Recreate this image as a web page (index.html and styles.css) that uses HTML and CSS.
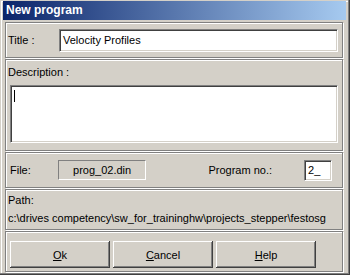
FILE: index.html
```html
<!DOCTYPE html>
<html lang="en">
<head>
  <meta charset="UTF-8">
  <title>New program</title>
  <link rel="stylesheet" href="styles.css">
</head>
<body>
  <div class="window">
    <div class="titlebar">New program</div>
    <div class="content">
      <div class="group g-title">
        <span class="label w-title">Title :</span>
        <div class="field title-field">Velocity Profiles</div>
      </div>
      <div class="group g-desc">
        <span class="label">Description :</span>
        <div class="field desc-field"><span class="caret"></span></div>
      </div>
      <div class="group g-file">
        <span class="label w-file">File:</span>
        <div class="static">prog_02.din</div>
        <span class="label w-prog">Program no.:</span>
        <div class="field prog-field">2_</div>
      </div>
      <div class="group g-path">
        <span class="label">Path:</span>
        <span class="label path-text">c:\drives competency\sw_for_traininghw\projects_stepper\festosg</span>
      </div>
      <div class="group g-buttons">
        <button class="btn"><u>O</u>k</button>
        <button class="btn"><u>C</u>ancel</button>
        <button class="btn"><u>H</u>elp</button>
      </div>
    </div>
  </div>
</body>
</html>
```

FILE: styles.css
```css
body{
  margin: 0;
  background: #d4d0c8;
  font-family: "Liberation Sans", Arial, sans-serif;
  font-size: 11px;
  color: #000;
}
.window{
  width: 350px;
  height: 275px;
  box-sizing: border-box;
  padding: 1px 4px 4px 3px;
  background: #d4d0c8;
  box-shadow: inset -1px -1px #404040, inset -2px -2px #808080, inset 1px 1px #d4d0c8, inset 2px 2px #fff;
  display: flex;
  flex-direction: column;
}
.titlebar{
  height: 19px;
  line-height: 19px;
  padding-left: 3px;
  color: #fff;
  font-weight: bold;
  font-size: 12px;
  background: linear-gradient(90deg, #0a246a, #a6caf0);
}
.content{
  display: flex;
  flex-direction: column;
  gap: 1px;
  padding: 2px 3px 0 2px;
}
.group{
  box-sizing: border-box;
  border: 1px solid #808080;
  box-shadow: 1px 1px 0 #fff, inset 1px 1px 0 #fff;
  display: flex;
  align-items: center;
}
.label{
  white-space: nowrap;
}
.field{
  background: #fff;
  box-sizing: border-box;
  border: 1px solid;
  border-color: #808080 #fff #fff #808080;
  box-shadow: inset 1px 1px #404040, inset -1px -1px #d4d0c8;
}
.g-title{
  height: 36px;
  padding: 0 4px 0 2px;
}
.w-title{
  width: 51px;
}
.title-field{
  flex: 1;
  height: 23px;
  line-height: 21px;
  padding-left: 3px;
}
.g-desc{
  height: 92px;
  flex-direction: column;
  align-items: stretch;
  padding: 6px 4px 7px 2px;
}
.g-desc .label{
  height: 18px;
}
.desc-field{
  flex: 1;
  margin: 1px 0 0 2px;
  padding: 4px 3px;
}
.caret{
  display: block;
  width: 1px;
  height: 12px;
  background: #000;
}
.g-file{
  height: 36px;
  padding: 0 10px 0 4px;
}
.w-file{
  width: 48px;
}
.static{
  width: 89px;
  height: 20px;
  box-sizing: border-box;
  border: 1px solid;
  border-color: #808080 #fff #fff #808080;
  text-align: center;
  line-height: 18px;
}
.w-prog{
  margin-left: 62px;
  width: 96px;
}
.prog-field{
  width: 28px;
  height: 21px;
  line-height: 19px;
  padding-left: 3px;
}
.g-path{
  height: 41px;
  flex-direction: column;
  align-items: flex-start;
  justify-content: flex-start;
  gap: 6px;
  padding: 4px 2px 0;
}
.g-buttons{
  height: 41px;
  padding: 9px 4px 0;
  align-items: flex-start;
  gap: 3px;
}
.btn{
  width: 100px;
  height: 27px;
  font-family: inherit;
  font-size: 11px;
  color: #000;
  background: #d4d0c8;
  border: none;
  padding: 0;
  box-shadow: inset -1px -1px #404040, inset 1px 1px #fff, inset -2px -2px #808080;
}
```
